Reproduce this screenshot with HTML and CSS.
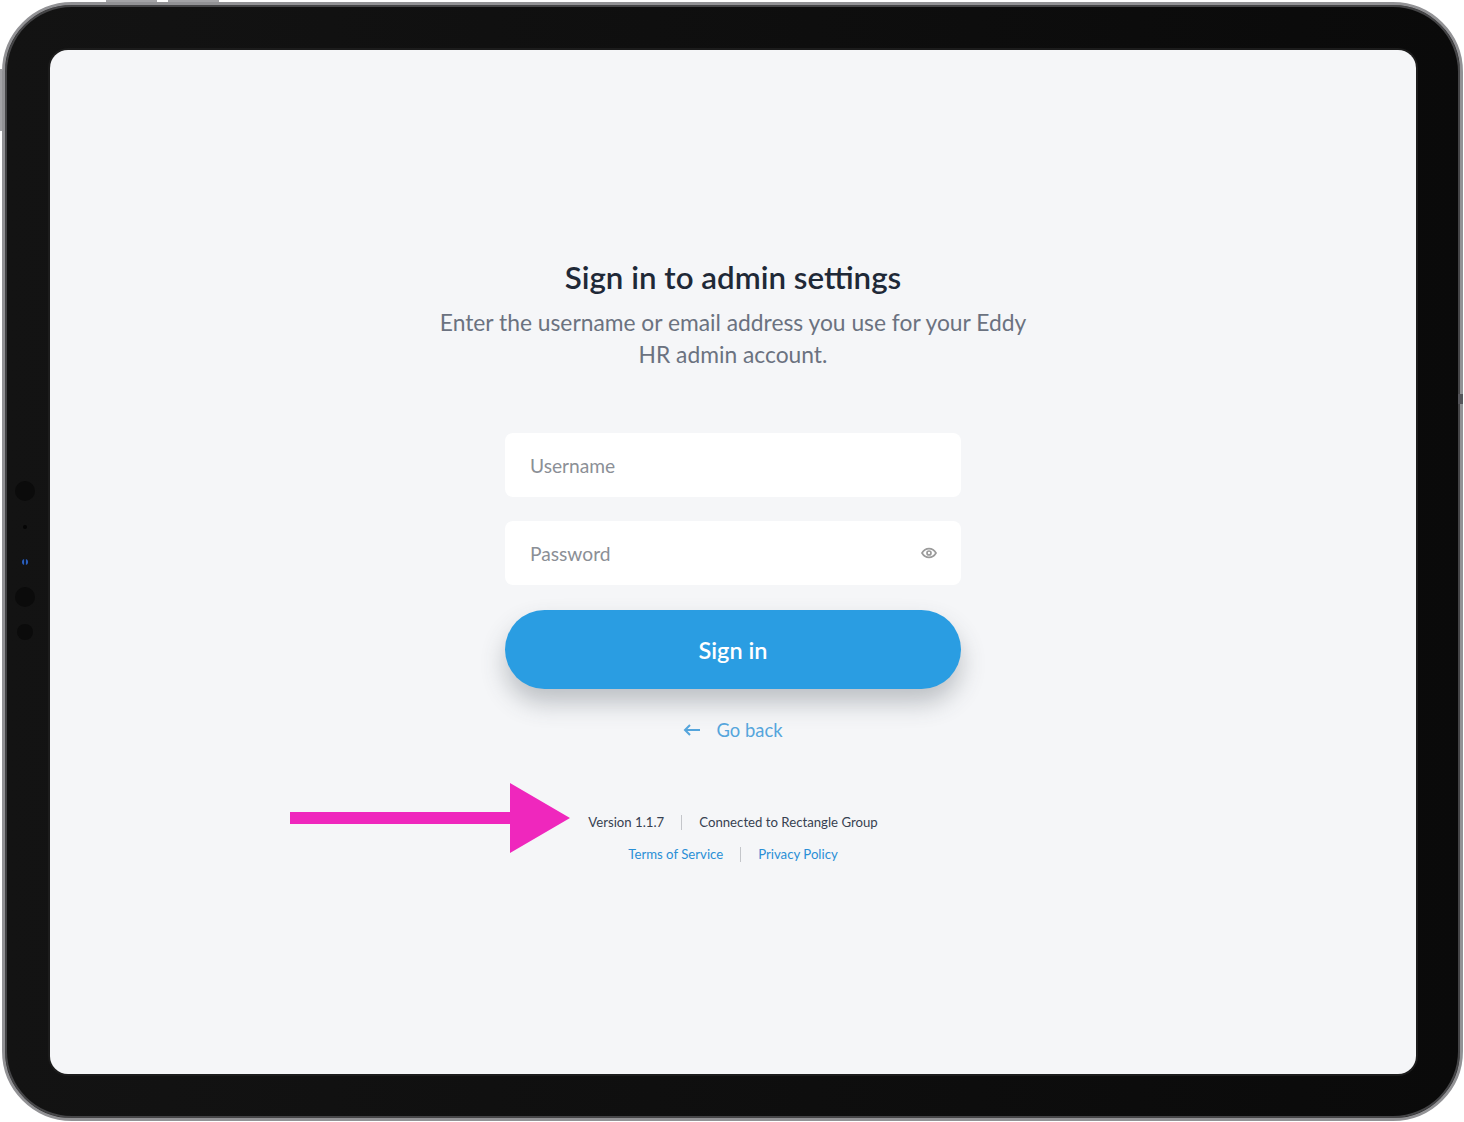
FILE: index.html
```html
<!DOCTYPE html>
<html lang="en">
<head>
<meta charset="UTF-8" />
<meta name="viewport" content="width=device-width, initial-scale=1.0"/>
<title>Sign in to admin settings</title>
<link rel="stylesheet" href="styles.css">
</head>
<body>

<!-- Tablet frame -->
<div class="device">
  <span class="hw-btn hw-top-1"></span>
  <span class="hw-btn hw-top-2"></span>
  <span class="hw-btn hw-left"></span>
  <span class="hw-notch hw-right"></span>

  <!-- Cameras on the left bezel -->
  <span class="sensor sensor-a"></span>
  <span class="sensor sensor-dot"></span>
  <span class="sensor sensor-blue"></span>
  <span class="sensor sensor-b"></span>
  <span class="sensor sensor-c"></span>

  <div class="bezel">
    <main class="screen">
      <h1 class="title">Sign in to admin settings</h1>
      <p class="subtitle">Enter the username or email address you use for your Eddy HR admin account.</p>

      <form class="login-form">
        <div class="field">
          <input class="field-input" type="text" placeholder="Username"/>
        </div>
        <div class="field">
          <input class="field-input" type="password" placeholder="Password"/>
          <svg class="eye-icon" viewBox="0 0 16 12" width="16" height="12" fill="none" stroke="#9a9a9a" aria-hidden="true">
            <path d="M1 6c1.700-2.900 4-4.300 7-4.300s5.300 1.400 7 4.300c-1.700 2.900-4 4.300-7 4.300S2.700 8.900 1 6z" stroke-width="1.700"/>
            <circle cx="8" cy="6" r="2" stroke-width="1.700"/>
          </svg>
        </div>
        <button class="signin-button" type="button">Sign in</button>
      </form>

      <a class="back-link" href="#">
        <svg viewBox="0 0 17 12" width="17" height="12" fill="none" stroke="#55a5dc" stroke-width="2" aria-hidden="true">
          <path d="M17 6H2M7 1L2 6l5 5"/>
        </svg>
        <span>Go back</span>
      </a>

      <div class="meta-row meta-info">
        <span>Version 1.1.7</span>
        <span class="divider"></span>
        <span>Connected to Rectangle Group</span>
      </div>
      <div class="meta-row meta-links">
        <a href="#">Terms of Service</a>
        <span class="divider"></span>
        <a href="#">Privacy Policy</a>
      </div>

      <!-- Annotation pointing at the version number -->
      <svg class="pink-arrow" viewBox="0 0 280 70" width="280" height="70" aria-hidden="true">
        <path d="M0 29H220V0L280 35L220 70V41H0z" fill="#ef27bd"/>
      </svg>
    </main>
  </div>
</div>

</body>
</html>
```

FILE: styles.css
```css
body {
  margin: 0;
  background: #fff;
  font-family: Lato, "Noto Sans", Arial, sans-serif;
}

/* Frame */
.device {
  position: relative;
  width: 1461px;
  height: 1119px;
  margin: 2px 0 0 2px;
}
.bezel {
  box-sizing: border-box;
  width: 100%;
  height: 100%;
  padding: 45px 44px 42px 45px;
  border: 3px solid #929295;
  border-radius: 70px;
  background: linear-gradient(to right, #131313, #0a0a0a);
  box-shadow: inset 0 0 0 2px #454547;
}
.hw-btn {
  position: absolute;
  background: #a3a3a6;
}
.hw-top-1 {
  top: -2px;
  left: 104px;
  width: 51px;
  height: 2px;
}
.hw-top-2 {
  top: -2px;
  left: 166px;
  width: 51px;
  height: 2px;
}
.hw-left {
  top: 67px;
  left: -2px;
  width: 2px;
  height: 62px;
}
.hw-notch {
  position: absolute;
  top: 392px;
  right: 0;
  width: 5px;
  height: 10px;
  background: #55555a;
}

.sensor {
  position: absolute;
  border-radius: 50%;
  background: #0b0b0b;
}
.sensor-a {
  top: 479px;
  left: 13px;
  width: 20px;
  height: 20px;
}
.sensor-dot {
  top: 523px;
  left: 21px;
  width: 4px;
  height: 4px;
  background: #050505;
}
.sensor-blue {
  top: 557px;
  left: 20px;
  width: 6px;
  height: 6px;
  background: linear-gradient(to right, #2a5fc0 0 35%, #0d1a30 35% 65%, #2a5fc0 65%);
}
.sensor-b {
  top: 585px;
  left: 13px;
  width: 20px;
  height: 20px;
}
.sensor-c {
  top: 622px;
  left: 15px;
  width: 16px;
  height: 16px;
}

/* Screen */
.screen {
  position: relative;
  display: flex;
  flex-direction: column;
  align-items: center;
  box-sizing: border-box;
  height: 1024px;
  padding-top: 207px;
  border-radius: 18px;
  background: #f5f6f8;
  box-shadow: 0 0 0 2px #1c1c1c;
}
.title {
  margin: 0;
  font-size: 31.300px;
  line-height: 40px;
  font-weight: 600;
  color: #1f2937;
}
.subtitle {
  width: 600px;
  margin: 9px 0 0;
  font-size: 22.800px;
  line-height: 32px;
  text-align: center;
  color: #6b7280;
}

.login-form {
  display: flex;
  flex-direction: column;
  gap: 24px;
  width: 456px;
  margin-top: 63px;
}
.field {
  position: relative;
}
.field-input {
  display: block;
  box-sizing: border-box;
  width: 100%;
  height: 64px;
  padding: 0 25px;
  border: 0;
  border-radius: 8px;
  background: #fff;
  font-family: inherit;
  font-size: 19.200px;
  color: #1f2937;
}
.field-input::placeholder {
  color: #8b8f96;
  opacity: 1;
}
.eye-icon {
  position: absolute;
  top: 26px;
  right: 24px;
}
.signin-button {
  height: 79px;
  margin-top: 1px;
  border: 0;
  border-radius: 40px;
  background: #2a9de2;
  box-shadow: 0 14px 24px rgba(60, 70, 80, 0.3);
  color: #fff;
  font-family: inherit;
  font-size: 23.500px;
  font-weight: 600;
}

.back-link {
  display: flex;
  align-items: center;
  gap: 16px;
  margin-top: 25px;
  font-size: 18.400px;
  line-height: 32px;
  color: #55a5dc;
  text-decoration: none;
}

.meta-row {
  display: flex;
  align-items: center;
  gap: 17px;
  font-size: 13.200px;
  line-height: 20px;
}
.meta-info {
  margin-top: 66px;
  color: #374151;
}
.meta-links {
  margin-top: 12px;
}
.meta-links a {
  color: #2a8fd6;
  text-decoration: none;
}
.divider {
  width: 1px;
  height: 15px;
  background: #c4c6ca;
}

.pink-arrow {
  position: absolute;
  top: 733px;
  left: 240px;
}
```
